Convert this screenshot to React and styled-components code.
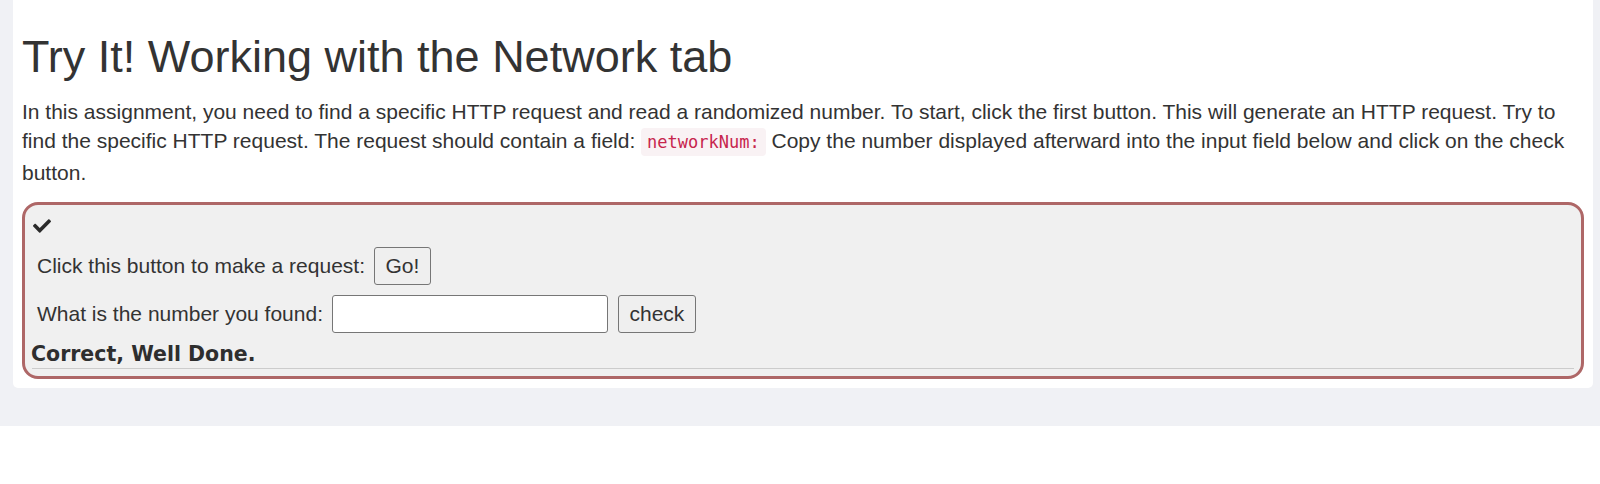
import React from "react"
import styled, { createGlobalStyle } from "styled-components"
import { FaCheck } from "react-icons/fa"

const GlobalStyle = createGlobalStyle`
  html, body {
    margin: 0;
    padding: 0;
    background: #ffffff;
  }
  body {
    font-family: "Liberation Sans", Arial, sans-serif;
    color: #333333;
  }
`

const Page = styled.div`
  background: #f0f1f5;
  padding: 0 7px 38px 13px;
`

const Card = styled.section`
  background: #ffffff;
  border-radius: 0 0 5px 5px;
  padding: 32px 9px 9px;
`

const Title = styled.h1`
  margin: 0 0 15px;
  font-size: 45px;
  font-weight: 400;
  line-height: 1.1;
  color: #333333;
`

const Intro = styled.p`
  margin: 0 0 15px;
  font-size: 21px;
  line-height: 29.5px;
`

const Code = styled.code`
  font-family: "DejaVu Sans Mono", "Liberation Mono", monospace;
  font-size: 17px;
  color: #c7254e;
  background: #f9f2f4;
  padding: 4px 6px;
  border-radius: 4px;
`

const Attack = styled.div`
  background: #f0f0f0;
  border: 3px solid #ae6767;
  border-radius: 16px;
  padding: 12px 7px 7px;
`

const Status = styled.div`
  display: flex;
  height: 18px;
  margin-left: 1px;
  color: #2b2b2b;
`

const Row = styled.form`
  display: flex;
  align-items: center;
  gap: 9px;
  margin: ${(p) => p.$top}px 0 0;
  padding-left: 5px;
  font-size: 21px;
`

const Button = styled.button`
  height: 38px;
  padding: 0 10.5px;
  font-family: "Liberation Sans", Arial, sans-serif;
  font-size: 21px;
  color: #333333;
  background: #efefef;
  border: 1px solid #767676;
  border-radius: 3px;
`

const Input = styled.input`
  box-sizing: border-box;
  width: 276px;
  height: 38px;
  margin-right: 1px;
  padding: 0 6px;
  font-size: 21px;
  background: #ffffff;
  border: 1px solid #767676;
  border-radius: 3px;
`

const Feedback = styled.div`
  margin: 10px 0 0 -1px;
  font-family: "DejaVu Sans", sans-serif;
  font-weight: 700;
  font-size: 20.5px;
  line-height: 22px;
  color: #2e2e2e;
`

const Rule = styled.hr`
  margin: 3px 0 0;
  border: 0;
  border-top: 1px solid #cccccc;
`

const App = () => (
  <>
    <GlobalStyle />
    <Page>
      <Card>
        <Title>Try It! Working with the Network tab</Title>
        <Intro>
          In this assignment, you need to find a specific HTTP request and read
          a randomized number. To start, click the first button. This will
          generate an HTTP request. Try to find the specific HTTP request. The
          request should contain a field: <Code>networkNum:</Code> Copy the
          number displayed afterward into the input field below and click on
          the check button.
        </Intro>
        <Attack>
          <Status>
            <FaCheck size={18} />
          </Status>
          <Row $top={12} onSubmit={(e) => e.preventDefault()}>
            <span>Click this button to make a request:</span>
            <Button type="button">Go!</Button>
          </Row>
          <Row $top={10} onSubmit={(e) => e.preventDefault()}>
            <span>What is the number you found:</span>
            <Input type="text" />
            <Button type="submit">check</Button>
          </Row>
          <Feedback>Correct, Well Done.</Feedback>
          <Rule />
        </Attack>
      </Card>
    </Page>
  </>
)

export default App
